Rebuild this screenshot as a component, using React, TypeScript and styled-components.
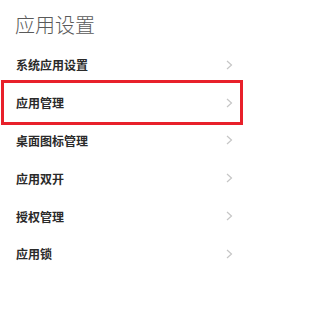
import styled, { createGlobalStyle } from "styled-components";

const GlobalStyle = createGlobalStyle`
    html, body {
        margin: 0;
        padding: 0;
        background: #ffffff;
    }
    body {
        font-family: "Noto Sans CJK SC", "Noto Sans", sans-serif;
    }
`;

const items = ["系统应用设置", "应用管理", "桌面图标管理", "应用双开", "授权管理", "应用锁"];

function Chevron() {
    return (
        <svg width="7" height="10" viewBox="0 0 7 10">
            <polyline points="1,1 5.5,5 1,9" fill="none" stroke="#c6c6c6" strokeWidth="1.2" />
        </svg>
    );
}

function App() {
    return (
        <Page>
            <GlobalStyle />
            <Title>应用设置</Title>
            <List>
                {items.map((label, i) => (
                    <Row key={label}>
                        <Label>{label}</Label>
                        <Chevron />
                        {i === 1 && <Highlight />}
                    </Row>
                ))}
            </List>
        </Page>
    );
}

const Page = styled.div`
    width: 250px;
    height: 323px;
    background: #ffffff;
    overflow: hidden;
`;

const Title = styled.h1`
    margin: 0;
    padding: 12px 15px 0;
    font-size: 20px;
    line-height: 26px;
    font-weight: 300;
    color: #5a5a5a;
`;

const List = styled.div`
    margin-top: 8px;
    display: flex;
    flex-direction: column;
`;

const Row = styled.div`
    position: relative;
    height: 37.8px;
    display: flex;
    align-items: center;
    justify-content: space-between;
    padding: 0 17px 0 16px;
`;

const Label = styled.span`
    font-size: 12px;
    font-weight: 700;
    color: #2a2a2a;
`;

const Highlight = styled.div`
    position: absolute;
    left: 1px;
    right: 7px;
    top: -4px;
    bottom: -3px;
    border: 3.5px solid #e8202a;
`;

export default App;
